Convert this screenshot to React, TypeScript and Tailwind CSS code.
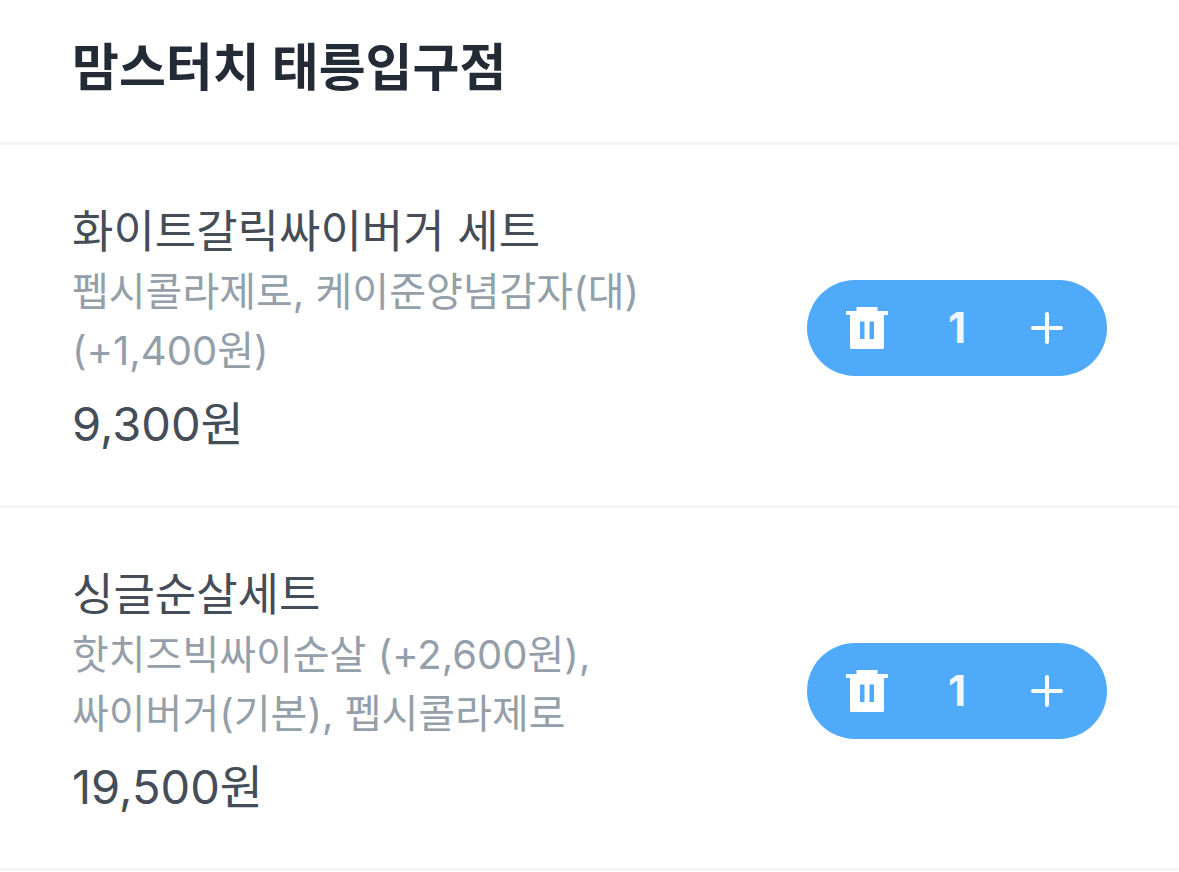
import { useState } from "react";

interface ICartItem {
  id: number;
  name: string;
  options: string;
  price: number;
}

const items: ICartItem[] = [
  {
    id: 1,
    name: "화이트갈릭싸이버거 세트",
    options: "펩시콜라제로, 케이준양념감자(대) (+1,400원)",
    price: 9300,
  },
  {
    id: 2,
    name: "싱글순살세트",
    options: "핫치즈빅싸이순살 (+2,600원), 싸이버거(기본), 펩시콜라제로",
    price: 19500,
  },
];

function TrashIcon() {
  return (
    <svg viewBox="0 0 42 42" className="w-[42px] h-[42px]" fill="currentColor" aria-hidden="true">
      <path
        fillRule="evenodd"
        d="M10.5 0h21v4H42v4h-4v32.5a1.5 1.5 0 0 1-1.5 1.5h-31A1.5 1.5 0 0 1 4 40.5V8H0V4h10.5zM14 14.5V32h4.5V14.5zM23.5 14.5V32H28V14.5z"
      />
    </svg>
  );
}

function PlusIcon() {
  return (
    <svg
      viewBox="0 0 32 32"
      className="w-8 h-8"
      fill="none"
      stroke="currentColor"
      strokeWidth="4"
      strokeLinecap="round"
      aria-hidden="true"
    >
      <path d="M16 2v28M2 16h28" />
    </svg>
  );
}

function QuantityStepper() {
  const [quantity, setQuantity] = useState(1);

  return (
    <div className="w-[300px] h-24 shrink-0 grid grid-cols-[120px_60px_120px] bg-[#4faaf9] rounded-full text-white">
      <button
        type="button"
        aria-label="삭제"
        className="flex items-center justify-center"
        onClick={() => setQuantity(Math.max(1, quantity - 1))}
      >
        <TrashIcon />
      </button>
      <span className="self-center text-center text-[42px] leading-[60px] font-bold text-[#f0f7fe]">
        {quantity}
      </span>
      <button
        type="button"
        aria-label="수량 추가"
        className="flex items-center justify-center"
        onClick={() => setQuantity(quantity + 1)}
      >
        <PlusIcon />
      </button>
    </div>
  );
}

function CartItem({ item }: { item: ICartItem }) {
  return (
    <li className="flex items-center justify-between gap-24 px-[72px] pt-[57px] pb-[51px] border-b-3 border-[#f5f5f6]">
      <div className="flex-1 break-keep">
        <h2 className="text-[45px] leading-[60px] text-[#454d58]">{item.name}</h2>
        <p className="text-[40px] leading-[59px] text-[#949faa]">{item.options}</p>
        <p className="mt-3.5 text-[47px] leading-[60px] text-[#454d58]">
          {item.price.toLocaleString("ko-KR")}원
        </p>
      </div>
      <QuantityStepper />
    </li>
  );
}

export default function App() {
  return (
    <main className="bg-white font-['Inter','Noto_Sans_CJK_KR',sans-serif]">
      <header className="px-[72px] pt-8 pb-[38px] border-b-3 border-[#f5f5f6]">
        <h1 className="text-[51px] leading-[72px] font-bold text-[#232c36]">맘스터치 태릉입구점</h1>
      </header>
      <ul>
        {items.map((item) => (
          <CartItem key={item.id} item={item} />
        ))}
      </ul>
    </main>
  );
}
